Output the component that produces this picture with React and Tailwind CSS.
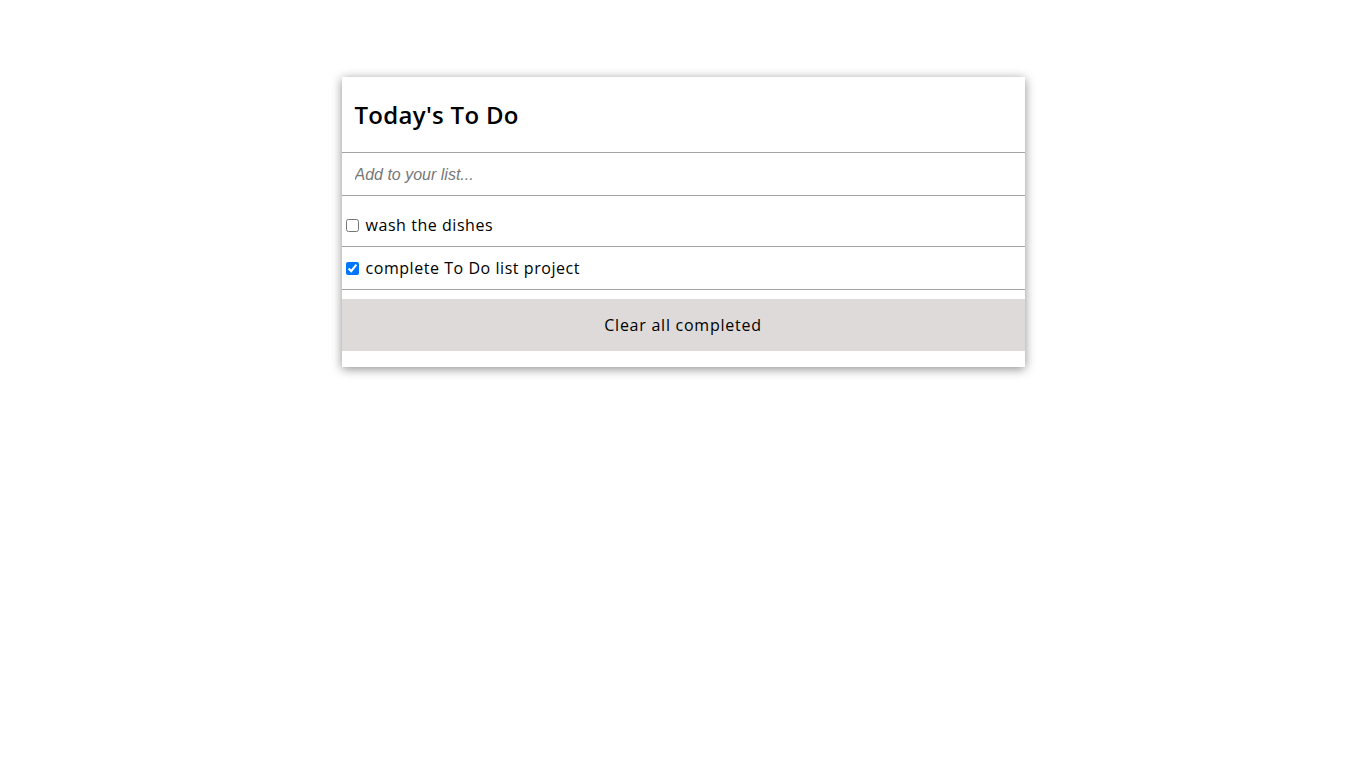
import React, { useState } from "react";

const initialTodos = [
  { id: 1, text: "wash the dishes", done: false },
  { id: 2, text: "complete To Do list project", done: true },
];

export default function App() {
  const [todos, setTodos] = useState(initialTodos);
  const [draft, setDraft] = useState("");

  const toggle = (id) =>
    setTodos(todos.map((t) => (t.id === id ? { ...t, done: !t.done } : t)));

  const addTodo = (e) => {
    e.preventDefault();
    if (!draft.trim()) return;
    setTodos([...todos, { id: Date.now(), text: draft.trim(), done: false }]);
    setDraft("");
  };

  return (
    <div className="min-h-screen bg-white pt-[77px] font-['Open_Sans',sans-serif] text-black">
      <div className="mx-auto w-[683px] bg-white pb-4 shadow-[0_2px_10px_rgba(0,0,0,0.45)]">
        {/* Header */}
        <div className="flex h-[76px] items-center border-b border-[#a3a3a3] px-[13px]">
          <h1 className="text-[24px] font-semibold leading-none tracking-[0.3px]">Today's To Do</h1>
        </div>

        {/* Input */}
        <form onSubmit={addTodo} className="border-b border-[#a3a3a3]">
          <input
            value={draft}
            onChange={(e) => setDraft(e.target.value)}
            placeholder="Add to your list..."
            className="block h-[42px] w-full px-[13px] pt-[2px] font-['Liberation_Sans',sans-serif] text-[16px] italic outline-none placeholder:text-[#777]"
          />
        </form>

        {/* List */}
        <ul className="pt-2">
          {todos.map((t) => (
            <li key={t.id} className="border-b border-[#a3a3a3] py-[9px]">
              <label className="flex items-center text-[16px] leading-6 tracking-[0.55px]">
                <input
                  type="checkbox"
                  checked={t.done}
                  onChange={() => toggle(t.id)}
                  className="mt-[1px] mr-[7px] ml-1 h-[13px] w-[13px] accent-[#0075ff]"
                />
                {t.text}
              </label>
            </li>
          ))}
        </ul>

        {/* Clear button */}
        <button
          onClick={() => setTodos(todos.filter((t) => !t.done))}
          className="mt-[9px] block h-[52px] w-full bg-[#dddad9] text-[16px] tracking-[0.75px]"
        >
          Clear all completed
        </button>
      </div>
    </div>
  );
}
